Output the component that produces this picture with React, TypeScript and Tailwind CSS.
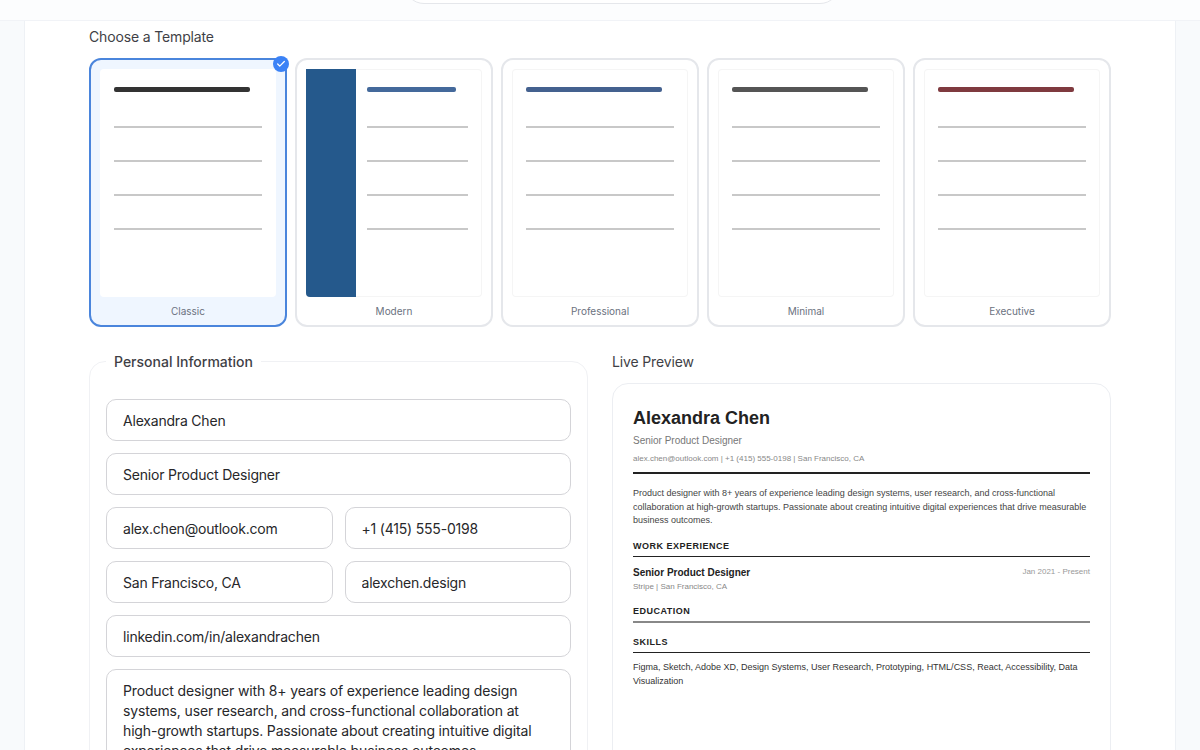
const templates = [
  { name: 'Classic', bar: 'bg-[#333333]', barWidth: 'w-[92%]', selected: true },
  { name: 'Modern', bar: 'bg-[#44699b]', barWidth: 'w-[88%]', sidebar: true },
  { name: 'Professional', bar: 'bg-[#44618f]', barWidth: 'w-[92%]' },
  { name: 'Minimal', bar: 'bg-[#555555]', barWidth: 'w-[92%]' },
  { name: 'Executive', bar: 'bg-[#7f3a3f]', barWidth: 'w-[92%]' },
];

const inputClass =
  'h-[42px] w-full min-w-0 rounded-[10px] border border-[#d4d4d8] bg-white px-4 text-[14px] tracking-[-0.2px] text-[#27272a] outline-none';

const CheckIcon = () => (
  <svg width="10" height="10" viewBox="0 0 24 24" fill="none" stroke="white" strokeWidth="3" strokeLinecap="round" strokeLinejoin="round">
    <path d="M20 6 9 17l-5-5"></path>
  </svg>
);

type Template = (typeof templates)[number];

const TemplateCard = ({ template }: { template: Template }) => (
  <div
    className={`relative flex h-[269px] flex-col rounded-xl border-2 p-[9px] pb-0 ${
      template.selected ? 'border-[#4a85dc] bg-[#eff6ff]' : 'border-[#e5e7eb] bg-white'
    }`}
  >
    {template.selected && (
      <div className="absolute -right-[4px] -top-[4px] flex h-4 w-4 items-center justify-center rounded-full bg-[#3b82f6]">
        <CheckIcon />
      </div>
    )}
    <div
      className={`flex h-[228px] rounded-[4px] bg-white ${
        template.selected ? '' : 'shadow-[inset_0_0_0_1px_#f5f5f5]'
      }`}
    >
      {template.sidebar && <div className="w-[50px] shrink-0 rounded-bl-[4px] bg-[#25598c]"></div>}
      <div className={`flex flex-1 flex-col pt-[18px] ${template.sidebar ? 'pl-[11px] pr-[14px]' : 'px-[14px]'}`}>
        <div className={`h-[5px] rounded-[2px] ${template.barWidth} ${template.bar}`}></div>
        <div className="mt-[34px] h-[2px] bg-[#c8c8c8]"></div>
        {[0, 1, 2].map((line) => (
          <div key={line} className="mt-[32px] h-[2px] bg-[#c8c8c8]"></div>
        ))}
      </div>
    </div>
    <div className="mt-[7px] text-center text-[10px] leading-[14px] text-[#6b7280]">{template.name}</div>
  </div>
);

const SectionTitle = ({ children, rule }: { children: string; rule: string }) => (
  <div className={`mb-[7px] border-b pb-[4px] text-[9px] font-bold uppercase leading-[11px] tracking-[0.5px] text-[#222222] ${rule}`}>
    {children}
  </div>
);

export default function App() {
  return (
    <div className="h-[750px] overflow-hidden bg-[#f8fafc] font-['Inter',sans-serif]">
      <header className="flex h-[21px] items-end justify-center overflow-hidden border-b border-[#f1f3f7] bg-[#fcfdfe] pb-[16px]">
        <div className="ml-[44px] h-10 w-[436px] shrink-0 rounded-full border border-[#e5e7eb] bg-white"></div>
      </header>

      <main className="mx-auto h-[729px] w-[1152px] border-x border-[#eef1f5] bg-white px-[64px] pt-[6px]">
        <h2 className="text-[14px] font-normal leading-5 tracking-[-0.15px] text-[#3f3f46]">Choose a Template</h2>
        <div className="mt-[11px] grid grid-cols-5 gap-2">
          {templates.map((template) => (
            <TemplateCard key={template.name} template={template} />
          ))}
        </div>

        <div className="mt-[23px] grid grid-cols-2 gap-6">
          <fieldset className="min-w-0 rounded-2xl border border-[#f0f1f4] px-4 pb-4 pt-[27px]">
            <legend className="px-2 pt-[2px] text-[14px] font-medium leading-5 text-[#3f3f46]">Personal Information</legend>
            <div className="flex flex-col gap-3">
              <input className={inputClass} readOnly value="Alexandra Chen" />
              <input className={inputClass} readOnly value="Senior Product Designer" />
              <div className="grid grid-cols-2 gap-3">
                <input className={inputClass} readOnly value="alex.chen@outlook.com" />
                <input className={inputClass} readOnly value="+1 (415) 555-0198" />
              </div>
              <div className="grid grid-cols-2 gap-3">
                <input className={inputClass} readOnly value="San Francisco, CA" />
                <input className={inputClass} readOnly value="alexchen.design" />
              </div>
              <input className={inputClass} readOnly value="linkedin.com/in/alexandrachen" />
              <textarea
                className="h-[112px] w-full rounded-[10px] border border-[#d4d4d8] bg-white px-4 py-[11px] text-[14px] leading-5 tracking-[-0.15px] text-[#27272a] outline-none"
                readOnly
                value="Product designer with 8+ years of experience leading design systems, user research, and cross-functional collaboration at high-growth startups. Passionate about creating intuitive digital experiences that drive measurable business outcomes."
              />
            </div>
          </fieldset>

          <div className="min-w-0 pt-[2px]">
            <h2 className="text-[14px] font-normal leading-5 tracking-[-0.15px] text-[#3f3f46]">Live Preview</h2>
            <div className="mt-[11px] h-[500px] rounded-2xl border border-[#eceef2] bg-white px-[20px] pt-[20px] font-['Liberation_Sans',Arial,sans-serif]">
              <div className="text-[18px] font-bold leading-[28px] text-[#222222]">Alexandra Chen</div>
              <div className="mt-[2px] text-[10px] leading-[14px] text-[#777777]">Senior Product Designer</div>
              <div className="mt-[5px] border-b-2 border-[#222222] pb-[8px] text-[8px] leading-[11px] text-[#888888]">
                alex.chen@outlook.com | +1 (415) 555-0198 | San Francisco, CA
              </div>
              <p className="mt-[13px] text-[9px] leading-[13.5px] text-[#444444]">
                Product designer with 8+ years of experience leading design systems, user research, and cross-functional
                collaboration at high-growth startups. Passionate about creating intuitive digital experiences that drive
                measurable business outcomes.
              </p>
              <div className="mt-[13px]">
                <SectionTitle rule="border-[#222222]">Work Experience</SectionTitle>
              </div>
              <div className="mt-[9px] flex items-start justify-between">
                <div className="text-[10px] font-bold leading-[13px] text-[#222222]">Senior Product Designer</div>
                <div className="text-[8px] leading-[11px] text-[#999999]">Jan 2021 - Present</div>
              </div>
              <div className="mt-[2px] text-[8px] leading-[11px] text-[#888888]">Stripe | San Francisco, CA</div>
              <div className="mt-[14px]">
                <SectionTitle rule="border-b-2 border-[#888888]">Education</SectionTitle>
              </div>
              <div className="mt-[14px]">
                <SectionTitle rule="border-[#222222]">Skills</SectionTitle>
              </div>
              <p className="text-[9px] leading-[14px] text-[#333333]">
                Figma, Sketch, Adobe XD, Design Systems, User Research, Prototyping, HTML/CSS, React, Accessibility, Data
                Visualization
              </p>
            </div>
          </div>
        </div>
      </main>
    </div>
  );
}
